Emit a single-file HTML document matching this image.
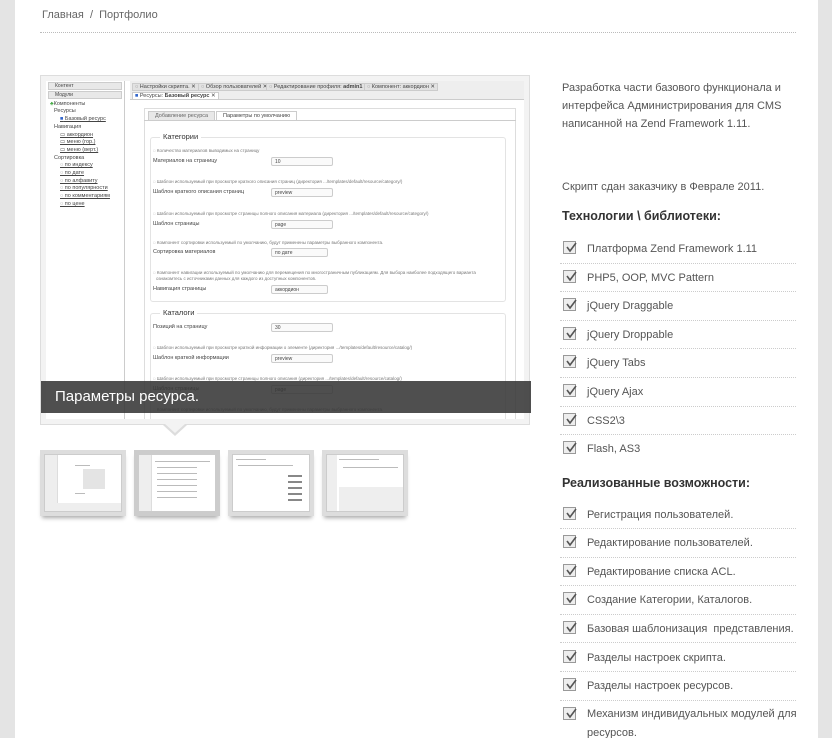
<!DOCTYPE html>
<html><head><meta charset="utf-8"><style>
*{margin:0;padding:0;box-sizing:border-box}
html,body{width:832px;height:738px;overflow:hidden}
body{background:#e4e4e4;font-family:"Liberation Sans",sans-serif;position:relative}
#pg{position:absolute;left:15px;top:0;width:803px;height:738px;background:#fff}
.a{position:absolute;white-space:nowrap}
.bc{left:27px;top:9px;font-size:11px;color:#666}
.hr{position:absolute;left:25px;width:756px;top:32px;border-top:1px dotted #bbb}
#fr{position:absolute;left:25px;top:75px;width:490px;height:350px;border:1px solid #ddd;background:#f3f3f3}
#sc{position:absolute;left:5px;top:5px;width:478px;height:338px;background:#fff;overflow:hidden;font-size:6px;color:#444}
.cap{position:absolute;left:0;top:305px;width:490px;height:32px;background:rgba(55,55,55,.88);color:#fff;font-size:15px;padding:7px 14px}
.tri{position:absolute;left:148px;top:425px;width:0;height:0;border-left:12px solid transparent;border-right:12px solid transparent;border-top:11px solid #ddd}
.tri2{position:absolute;left:150px;top:424px;width:0;height:0;border-left:10px solid transparent;border-right:10px solid transparent;border-top:9px solid #f3f3f3}
.th{position:absolute;top:450px;width:86px;height:66px;background:#ddd;padding:4px;box-shadow:0 4px 4px -2px #aaa}
.th>div{position:relative;width:100%;height:100%;background:#fff;border:1px solid #ccc;overflow:hidden}
.th i{position:absolute;background:#bbb;height:1px;display:block}
.th b{position:absolute;background:#eee;display:block}
.r{font-size:11px;color:#555}
.h{font-size:12.5px;font-weight:bold;color:#333}
.li{position:absolute;left:545px;width:236px;height:28.6px;border-bottom:1px dotted #ccc;font-size:11px;color:#555}
.li span{position:absolute;left:27px;top:8px;white-space:nowrap}
.cb{position:absolute;left:3px;top:6px;width:13px;height:13px;border:1px solid #999;background:#eee}
.cb svg{position:absolute;left:1px;top:0}
.in{position:absolute;height:9px;border:1px solid #ccc;background:#fafafa;font-size:5px;padding:1px 3px;border-radius:2px}
.bx{position:absolute;border:1px solid #e3e3e3;border-radius:3px}
.g{color:#777}
</style></head><body>
<div id="pg">
<div class="a bc">Главная&nbsp;&nbsp;/&nbsp;&nbsp;Портфолио</div>
<div class="hr"></div>

<div id="fr"><div id="sc">
 <div class="a" style="left:0;top:0;width:79px;height:338px;border-right:1px solid #ccc;background:#fff"></div>
 <div class="a" style="left:2px;top:1px;width:74px;height:8px;background:#e8e8e8;border:1px solid #ccc;padding-left:6px;font-size:5px">Контент</div>
 <div class="a" style="left:2px;top:10px;width:74px;height:8px;background:#e8e8e8;border:1px solid #ccc;padding-left:6px;font-size:5px">Модули</div>
 <div class="a" style="left:4px;top:20px;font-size:5.5px"><b style="color:#4a4">♣</b>Компоненты</div>
 <div class="a" style="left:8px;top:27px;font-size:5.5px">Ресурсы</div>
 <div class="a" style="left:14px;top:35px;font-size:5.5px;text-decoration:underline"><span style="color:#36c">■</span> Базовый ресурс</div>
 <div class="a" style="left:8px;top:43px;font-size:5.5px">Навигация</div>
 <div class="a" style="left:14px;top:51px;font-size:5.5px;text-decoration:underline">▭ аккордион</div>
 <div class="a" style="left:14px;top:58px;font-size:5.5px;text-decoration:underline">▭ меню (гор.)</div>
 <div class="a" style="left:14px;top:66px;font-size:5.5px;text-decoration:underline">▭ меню (верт.)</div>
 <div class="a" style="left:8px;top:74px;font-size:5.5px">Сортировка</div>
 <div class="a" style="left:14px;top:81px;font-size:5.5px;text-decoration:underline">◌ по индексу</div>
 <div class="a" style="left:14px;top:89px;font-size:5.5px;text-decoration:underline">◌ по дате</div>
 <div class="a" style="left:14px;top:97px;font-size:5.5px;text-decoration:underline">◌ по алфавиту</div>
 <div class="a" style="left:14px;top:104px;font-size:5.5px;text-decoration:underline">◌ по популярности</div>
 <div class="a" style="left:14px;top:112px;font-size:5.5px;text-decoration:underline">◌ по комментариям</div>
 <div class="a" style="left:14px;top:120px;font-size:5.5px;text-decoration:underline">◌ по цене</div>
 <div class="a" style="left:84px;top:0;width:394px;height:19px;background:#eee;border-bottom:1px solid #ccc"></div>
 <div class="a" style="left:86px;top:2px;font-size:5.5px;background:#e2e2e2;border:1px solid #ccc;padding:0 2px">◌ Настройки скрипта. ✕</div>
 <div class="a" style="left:152px;top:2px;font-size:5.5px;background:#e2e2e2;border:1px solid #ccc;padding:0 2px">◌ Обзор пользователей ✕</div>
 <div class="a" style="left:220px;top:2px;font-size:5.5px;background:#e2e2e2;border:1px solid #ccc;padding:0 2px">◌ Редактирование профиля: <b>admin1</b> ✕</div>
 <div class="a" style="left:318px;top:2px;font-size:5.5px;background:#e2e2e2;border:1px solid #ccc;padding:0 2px">◌ Компонент: аккордион ✕</div>
 <div class="a" style="left:86px;top:11px;font-size:5.5px;background:#fff;border:1px solid #ccc;padding:0 2px"><span style="color:#36c">■</span> Ресурсы: <b>Базовый ресурс</b> ✕</div>
 <div class="a" style="left:98px;top:27px;width:372px;height:320px;border:1px solid #ddd"></div>
 <div class="a" style="left:102px;top:30px;font-size:5.5px;background:#e8e8e8;border:1px solid #ccc;padding:1px 6px;color:#666">Добавление ресурса</div>
 <div class="a" style="left:170px;top:30px;font-size:5.5px;background:#fff;border:1px solid #ccc;border-bottom:none;padding:1px 6px">Параметры по умолчанию</div>
 <div class="a" style="left:98px;top:39px;width:372px;border-top:1px solid #ccc"></div>
 <div class="bx" style="left:104px;top:56px;width:356px;height:165px"></div>
 <div class="a" style="left:114px;top:51px;font-size:7.5px;background:#fff;padding:0 3px;color:#333">Категории</div>
 <div class="a g" style="left:107px;top:67px;font-size:4.5px">◌ Количество материалов выводимых на страницу</div>
 <div class="a" style="left:107px;top:77px;font-size:5.5px">Материалов на страницу</div>
 <div class="in" style="left:225px;top:76px;width:62px">10</div>
 <div class="a g" style="left:107px;top:98px;font-size:4.5px">◌ Шаблон используемый при просмотре краткого описания страниц (директория .../templates/default/resource/category/)</div>
 <div class="a" style="left:107px;top:108px;font-size:5.5px">Шаблон краткого описания страниц</div>
 <div class="in" style="left:225px;top:107px;width:62px">preview</div>
 <div class="a g" style="left:107px;top:130px;font-size:4.5px">◌ Шаблон используемый при просмотре страницы полного описания материала (директория .../templates/default/resource/category/)</div>
 <div class="a" style="left:107px;top:140px;font-size:5.5px">Шаблон страницы</div>
 <div class="in" style="left:225px;top:139px;width:62px">page</div>
 <div class="a g" style="left:107px;top:159px;font-size:4.5px">◌ Компонент сортировки используемый по умолчанию, будут применены параметры выбранного компонента.</div>
 <div class="a" style="left:107px;top:168px;font-size:5.5px">Сортировка материалов</div>
 <div class="in" style="left:225px;top:167px;width:57px">по дате</div>
 <div class="a g" style="left:107px;top:189px;font-size:4.5px">◌ Компонент навигации используемый по умолчанию для перемещения по многостраничным публикациям. Для выбора наиболее подходящего варианта</div>
 <div class="a g" style="left:110px;top:195px;font-size:4.5px">ознакомтесь с источниками данных для каждого из доступных компонентов.</div>
 <div class="a" style="left:107px;top:205px;font-size:5.5px">Навигация страницы</div>
 <div class="in" style="left:225px;top:204px;width:57px">аккордион</div>
 <div class="bx" style="left:104px;top:232px;width:356px;height:110px"></div>
 <div class="a" style="left:114px;top:227px;font-size:7.5px;background:#fff;padding:0 3px;color:#333">Каталоги</div>
 <div class="a" style="left:107px;top:243px;font-size:5.5px">Позиций на страницу</div>
 <div class="in" style="left:225px;top:242px;width:62px">30</div>
 <div class="a g" style="left:107px;top:264px;font-size:4.5px">◌ Шаблон используемый при просмотре краткой информации о элементе (директория .../templates/default/resource/catalog/)</div>
 <div class="a" style="left:107px;top:274px;font-size:5.5px">Шаблон краткой информации</div>
 <div class="in" style="left:225px;top:273px;width:62px">preview</div>
 <div class="a g" style="left:107px;top:295px;font-size:4.5px">◌ Шаблон используемый при просмотре страницы полного описания (директория .../templates/default/resource/catalog/)</div>
 <div class="a" style="left:107px;top:305px;font-size:5.5px">Шаблон страницы</div>
 <div class="in" style="left:225px;top:304px;width:62px">page</div>
 <div class="a g" style="left:107px;top:326px;font-size:4.5px">◌ Компонент сортировки используемый по умолчанию, будут применены параметры выбранного компонента.</div>
</div>
<div class="cap">Параметры ресурса.</div>
</div>
<div class="tri"></div><div class="tri2"></div>

<div class="th" style="left:25px"><div><b style="left:0;top:0;width:13px;height:56px;border-right:1px solid #ddd"></b><b style="left:0;top:48px;width:78px;height:8px"></b><i style="left:30px;top:10px;width:15px"></i><i style="left:38px;top:14px;width:22px;height:20px;background:#e4e4e4"></i><i style="left:30px;top:38px;width:10px"></i></div></div>
<div class="th" style="left:119px;background:#ccc"><div><b style="left:0;top:0;width:13px;height:56px;border-right:1px solid #ddd"></b><i style="left:16px;top:6px;width:55px"></i><i style="left:18px;top:12px;width:40px"></i><i style="left:18px;top:18px;width:40px"></i><i style="left:18px;top:24px;width:40px"></i><i style="left:18px;top:30px;width:40px"></i><i style="left:18px;top:36px;width:40px"></i><i style="left:18px;top:42px;width:40px"></i></div></div>
<div class="th" style="left:213px"><div><i style="left:3px;top:4px;width:30px"></i><i style="left:5px;top:10px;width:55px"></i><i style="left:55px;top:20px;width:14px;height:2px;background:#888"></i><i style="left:55px;top:26px;width:14px;height:2px;background:#888"></i><i style="left:55px;top:32px;width:14px;height:2px;background:#888"></i><i style="left:55px;top:38px;width:14px;height:2px;background:#888"></i><i style="left:55px;top:44px;width:14px;height:2px;background:#888"></i></div></div>
<div class="th" style="left:307px"><div><b style="left:0;top:0;width:10px;height:56px"></b><i style="left:12px;top:4px;width:40px"></i><i style="left:16px;top:12px;width:55px"></i><b style="left:12px;top:32px;width:66px;height:24px"></b></div></div>

<div class="a r" style="left:547px;top:79px;line-height:18px;white-space:normal;width:240px">Разработка части базового функционала и интерфейса Администрирования для CMS написанной на Zend Framework 1.11.</div>
<div class="a r" style="left:547px;top:181px">Скрипт сдан заказчику в Феврале 2011.</div>
<div class="a h" style="left:547px;top:209px">Технологии \ библиотеки:</div>

<div class="li" style="top:235px"><div class="cb"><svg width="12" height="11"><path d="M2 5 L5 9 L11 1" stroke="#555" stroke-width="1.6" fill="none"/></svg></div><span>Платформа Zend Framework 1.11</span></div>
<div class="li" style="top:263.6px"><div class="cb"><svg width="12" height="11"><path d="M2 5 L5 9 L11 1" stroke="#555" stroke-width="1.6" fill="none"/></svg></div><span>PHP5, OOP, MVC Pattern</span></div>
<div class="li" style="top:292.2px"><div class="cb"><svg width="12" height="11"><path d="M2 5 L5 9 L11 1" stroke="#555" stroke-width="1.6" fill="none"/></svg></div><span>jQuery Draggable</span></div>
<div class="li" style="top:320.8px"><div class="cb"><svg width="12" height="11"><path d="M2 5 L5 9 L11 1" stroke="#555" stroke-width="1.6" fill="none"/></svg></div><span>jQuery Droppable</span></div>
<div class="li" style="top:349.4px"><div class="cb"><svg width="12" height="11"><path d="M2 5 L5 9 L11 1" stroke="#555" stroke-width="1.6" fill="none"/></svg></div><span>jQuery Tabs</span></div>
<div class="li" style="top:378px"><div class="cb"><svg width="12" height="11"><path d="M2 5 L5 9 L11 1" stroke="#555" stroke-width="1.6" fill="none"/></svg></div><span>jQuery Ajax</span></div>
<div class="li" style="top:406.6px"><div class="cb"><svg width="12" height="11"><path d="M2 5 L5 9 L11 1" stroke="#555" stroke-width="1.6" fill="none"/></svg></div><span>CSS2\3</span></div>
<div class="li" style="top:435.2px;border:none"><div class="cb"><svg width="12" height="11"><path d="M2 5 L5 9 L11 1" stroke="#555" stroke-width="1.6" fill="none"/></svg></div><span>Flash, AS3</span></div>

<div class="a h" style="left:547px;top:476px">Реализованные возможности:</div>
<div class="li" style="top:500.5px"><div class="cb"><svg width="12" height="11"><path d="M2 5 L5 9 L11 1" stroke="#555" stroke-width="1.6" fill="none"/></svg></div><span>Регистрация пользователей.</span></div>
<div class="li" style="top:529.1px"><div class="cb"><svg width="12" height="11"><path d="M2 5 L5 9 L11 1" stroke="#555" stroke-width="1.6" fill="none"/></svg></div><span>Редактирование пользователей.</span></div>
<div class="li" style="top:557.7px"><div class="cb"><svg width="12" height="11"><path d="M2 5 L5 9 L11 1" stroke="#555" stroke-width="1.6" fill="none"/></svg></div><span>Редактирование списка ACL.</span></div>
<div class="li" style="top:586.3px"><div class="cb"><svg width="12" height="11"><path d="M2 5 L5 9 L11 1" stroke="#555" stroke-width="1.6" fill="none"/></svg></div><span>Создание Категории, Каталогов.</span></div>
<div class="li" style="top:614.9px"><div class="cb"><svg width="12" height="11"><path d="M2 5 L5 9 L11 1" stroke="#555" stroke-width="1.6" fill="none"/></svg></div><span>Базовая шаблонизация&nbsp; представления.</span></div>
<div class="li" style="top:643.5px"><div class="cb"><svg width="12" height="11"><path d="M2 5 L5 9 L11 1" stroke="#555" stroke-width="1.6" fill="none"/></svg></div><span>Разделы настроек скрипта.</span></div>
<div class="li" style="top:672.1px"><div class="cb"><svg width="12" height="11"><path d="M2 5 L5 9 L11 1" stroke="#555" stroke-width="1.6" fill="none"/></svg></div><span>Разделы настроек ресурсов.</span></div>
<div class="li" style="top:700.7px;border:none;height:37px"><div class="cb"><svg width="12" height="11"><path d="M2 5 L5 9 L11 1" stroke="#555" stroke-width="1.6" fill="none"/></svg></div><span style="white-space:normal;width:215px;line-height:19px;top:4px">Механизм индивидуальных модулей для ресурсов.</span></div>
</div>
</body></html>
